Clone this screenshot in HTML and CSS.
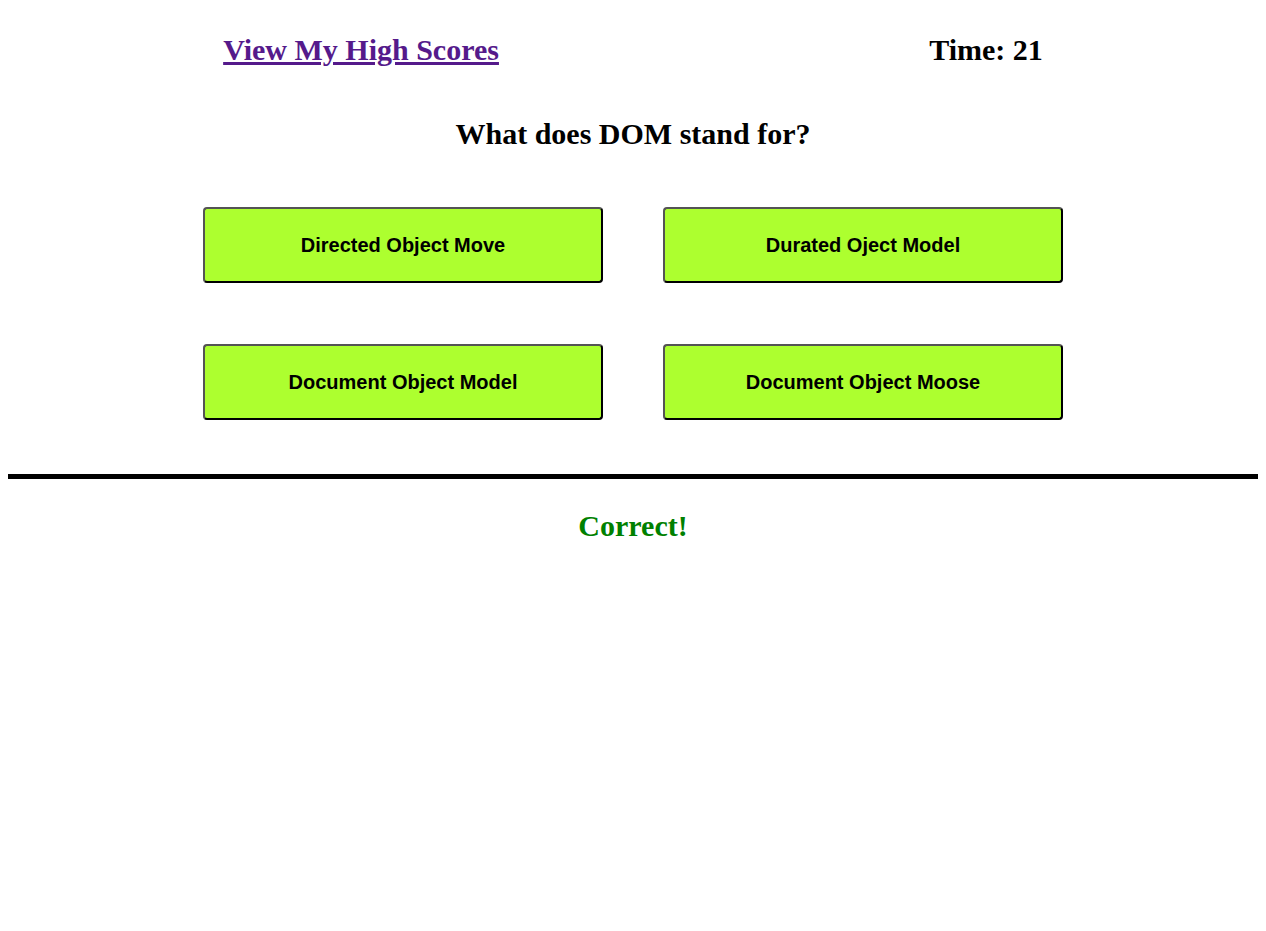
FILE: index.html
```html
<!DOCTYPE html>
<html>
<head>
<meta charset="utf-8">
<link rel="stylesheet" href="styles.css">
</head>
<body>
<header class="top">
  <a class="scores" href="#">View My High Scores</a>
  <div class="timer">Time: 21</div>
</header>
<main class="quiz">
  <h2 class="question">What does DOM stand for?</h2>
  <div class="answers">
    <button class="answer">Directed Object Move</button>
    <button class="answer">Durated Oject Model</button>
    <button class="answer">Document Object Model</button>
    <button class="answer">Document Object Moose</button>
  </div>
</main>
<hr class="divider">
<p class="result">Correct!</p>
</body>
</html>
```

FILE: styles.css
```css
html, body {
  background: #fff;
}
body {
  margin: 8px;
  font-family: "Liberation Serif", "Times New Roman", serif;
  color: #000;
}
.top {
  display: flex;
  justify-content: space-around;
  align-items: center;
  padding-top: 32px;
  font-size: 30px;
  font-weight: bold;
  line-height: 20px;
}
.scores {
  color: #551a8b;
  text-decoration: underline;
}
.quiz {
  display: flex;
  flex-direction: column;
  align-items: center;
}
.question {
  margin: 57px 0 0 0;
  font-size: 30px;
  line-height: 34px;
  font-weight: bold;
}
.answers {
  display: grid;
  grid-template-columns: 400px 400px;
  column-gap: 60px;
  row-gap: 61px;
  margin-top: 56px;
}
.answer {
  height: 76px;
  background: #adff2f;
  border: 2px outset #000;
  border-radius: 4px;
  font-family: "Liberation Sans", Arial, sans-serif;
  font-size: 20px;
  font-weight: bold;
  color: #000;
  padding: 0;
}
.divider {
  margin: 54px 0 0 0;
  border: none;
  height: 5px;
  background: #000;
}
.result {
  margin: 30px 0 0 0;
  text-align: center;
  color: #008000;
  font-size: 30px;
  font-weight: bold;
  line-height: 34px;
}
```
